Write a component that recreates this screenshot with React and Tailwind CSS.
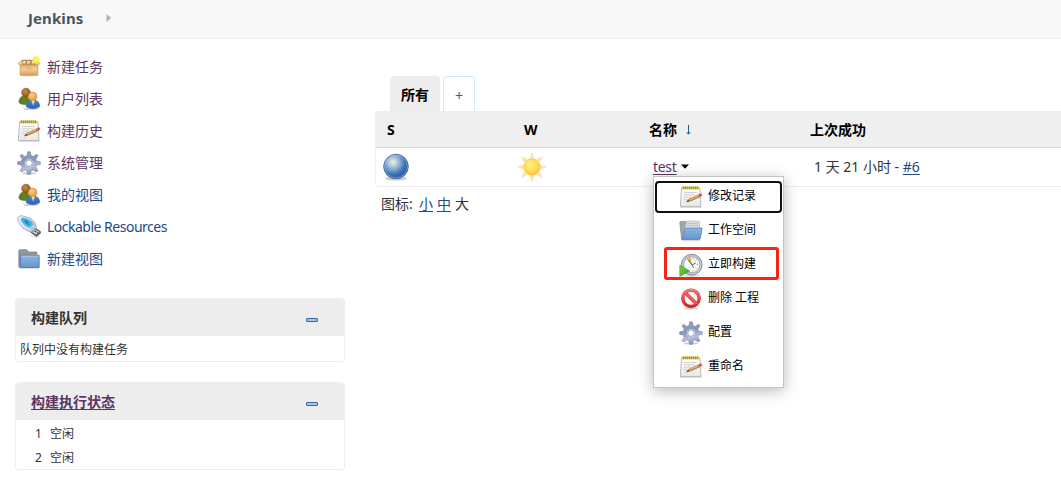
import React from "react";

function Svg({ children, className = "h-6 w-6" }) {
  return (
    <svg viewBox="0 0 24 24" className={`${className} block shrink-0`} aria-hidden="true">
      {children}
    </svg>
  );
}

function Gradients() {
  return (
    <svg className="absolute h-0 w-0" aria-hidden="true">
      <defs>
        <linearGradient id="box" x1="0" y1="0" x2="0" y2="1">
          <stop offset="0" stopColor="#dba05a" />
          <stop offset="0.4" stopColor="#f6cf98" />
          <stop offset="1" stopColor="#d9a15e" />
        </linearGradient>
        <radialGradient id="glow">
          <stop offset="0" stopColor="#fffc6a" />
          <stop offset="0.5" stopColor="#fbf02c" />
          <stop offset="1" stopColor="#fff27a" stopOpacity="0" />
        </radialGradient>
        <radialGradient id="hair" cx="0.4" cy="0.35" r="0.7">
          <stop offset="0" stopColor="#c39246" />
          <stop offset="1" stopColor="#84520f" />
        </radialGradient>
        <radialGradient id="face" cx="0.4" cy="0.35" r="0.7">
          <stop offset="0" stopColor="#ffd08a" />
          <stop offset="1" stopColor="#e3952e" />
        </radialGradient>
        <linearGradient id="suit" x1="0" y1="0" x2="0" y2="1">
          <stop offset="0" stopColor="#4d86ca" />
          <stop offset="1" stopColor="#2a61ab" />
        </linearGradient>
        <linearGradient id="paper" x1="0" y1="0" x2="0" y2="1">
          <stop offset="0" stopColor="#ffffff" />
          <stop offset="1" stopColor="#e6e6e6" />
        </linearGradient>
        <linearGradient id="gear" x1="0" y1="0" x2="0.3" y2="1">
          <stop offset="0" stopColor="#9aa3b8" />
          <stop offset="0.5" stopColor="#8795be" />
          <stop offset="0.8" stopColor="#b9c0dd" />
          <stop offset="1" stopColor="#8f9cc4" />
        </linearGradient>
        <linearGradient id="folder" x1="0" y1="0" x2="0" y2="1">
          <stop offset="0" stopColor="#8fb4df" />
          <stop offset="1" stopColor="#6496cf" />
        </linearGradient>
        <linearGradient id="metal" x1="0" y1="0" x2="1" y2="1">
          <stop offset="0" stopColor="#eef2f6" />
          <stop offset="1" stopColor="#b3bdcb" />
        </linearGradient>
        <radialGradient id="ball" cx="0.38" cy="0.33" r="0.65">
          <stop offset="0" stopColor="#f1f4dc" />
          <stop offset="0.35" stopColor="#9dbbd8" />
          <stop offset="0.75" stopColor="#3a72b4" />
          <stop offset="1" stopColor="#2c5f9f" />
        </radialGradient>
        <radialGradient id="sun" cx="0.4" cy="0.35" r="0.7">
          <stop offset="0" stopColor="#fff18a" />
          <stop offset="0.6" stopColor="#ffdc50" />
          <stop offset="1" stopColor="#fabf3c" />
        </radialGradient>
        <linearGradient id="stop" x1="0" y1="0" x2="0" y2="1">
          <stop offset="0" stopColor="#f07a7c" />
          <stop offset="1" stopColor="#d8232a" />
        </linearGradient>
        <linearGradient id="go" x1="0" y1="0" x2="1" y2="1">
          <stop offset="0" stopColor="#7ed957" />
          <stop offset="1" stopColor="#2f9a1a" />
        </linearGradient>
      </defs>
    </svg>
  );
}

function BoxIcon() {
  return (
    <Svg>
      <ellipse cx="12" cy="20.5" rx="9.5" ry="1.2" fill="#000" opacity="0.13" />
      <path d="M5 5h14l1.500 5h-17z" fill="#b98b54" stroke="#c08e50" strokeWidth=".5" />
      <path d="M6.300 6h2.500l-.4 2.400H5.500zm4 0h2.500l.3 2.400h-3.200zm4.300 0h2l.8 2.400h-2.500z" fill="#ecdcc0" />
      <path d="M3.200 9.500h17.600v10.700H3.200z" fill="url(#box)" stroke="#c18e51" strokeWidth=".7" />
      <path d="M5 5.200.7 8.600l2.500 1.700L5.300 9zm14 0 4.300 3.400-2.500 1.700L18.700 9z" fill="#f0cd9b" stroke="#c79459" strokeWidth=".5" />
      <path d="M9.300 12.500h5.400v2.200H9.300z" fill="#e0ac6b" opacity=".7" />
      <circle cx="19" cy="5" r="4.700" fill="url(#glow)" />
    </Svg>
  );
}

function PeopleIcon() {
  return (
    <Svg>
      <ellipse cx="14" cy="21.800" rx="8" ry="1.200" fill="#000" opacity="0.18" />
      <path d="M2 15.500c0-4 2-6.500 5.300-6.500s5.300 2.500 5.300 6.500c-1.800 2.600-8.700 2.600-10.600 0z" fill="#63801d" stroke="#4a6410" strokeWidth=".6" />
      <circle cx="9" cy="5.600" r="4.400" fill="url(#hair)" stroke="#7d4e12" strokeWidth=".5" />
      <path d="M9.200 19.600c0-4 2-6.500 6.700-6.500s6.700 2.500 6.700 6.500c-2 2.400-11.200 2.400-13.400 0z" fill="url(#suit)" stroke="#2a5c9f" strokeWidth=".6" />
      <path d="m14.300 13.200 1.900 5.400 1.900-5.400z" fill="#f3f6fa" />
      <path d="m15.600 14.500.6 3.500.6-3.500z" fill="#86abd8" />
      <circle cx="15.700" cy="9.400" r="4.300" fill="url(#face)" stroke="#cb8221" strokeWidth=".5" />
    </Svg>
  );
}

function NotepadIcon() {
  return (
    <Svg>
      <path d="M1.500 21.600h21v1.200h-21z" fill="#000" opacity=".15" />
      <path d="M2.600 3h18.200l1.200 18.600H1.300z" fill="url(#paper)" stroke="#a9a9a9" strokeWidth=".8" />
      <path d="M3.300 1.600h16.900v2.600H3.300z" fill="#d6c661" />
      <path d="M4.300 1.300v3m2-3v3m2-3v3m2-3v3m2-3v3m2-3v3m2-3v3m2-3v3" stroke="#8c7a22" strokeWidth=".8" />
      <path d="M5 7.500h12.500M5 9.800h11M4.800 12.200h7M4.800 14.600h4" stroke="#c6c6c6" strokeWidth=".8" />
      <path d="m7.500 16.800 2.800-2.700 9.300-4.200 1 2-9.100 4.100z" fill="#dc9c40" stroke="#805321" strokeWidth=".6" />
      <path d="m7.500 16.800 1.800-1.700.8 1.200z" fill="#3d3226" />
      <path d="m10.600 14.600 9-4" stroke="#f3ca82" strokeWidth=".7" />
      <path d="m19.600 9.700 2-.9c1.200-.4 2 1.200.9 1.900l-2 1z" fill="#dd554e" stroke="#b7463f" strokeWidth=".4" />
    </Svg>
  );
}

function GearIcon() {
  return (
    <Svg>
      <ellipse cx="12" cy="22.400" rx="7" ry="1.200" fill="#000" opacity=".2" />
      <path
        fill="url(#gear)"
        stroke="#7583a5"
        strokeWidth=".6"
        strokeLinejoin="round"
        fillRule="evenodd"
        d="M10.700.8h2.600l.7 3.800 2.200.9 3.300-2.300 1.500 1.500-2.200 3.400.9 2.100 3.600.6v2.600l-3.600.7-.9 2.200 2.200 3.200-1.500 1.600-3.300-2.200-2.200.9-.7 3.500h-2.600l-.7-3.500-2.200-.9-3.300 2.200L3 19.500l2.200-3.200-.9-2.200-3.600-.7v-2.600l3.600-.6.9-2.100L3 4.700l1.500-1.500 3.300 2.300 2.200-.9zM12 8.900a3.200 3.200 0 1 0 0 6.400 3.200 3.200 0 0 0 0-6.400z"
      />
      <circle cx="12" cy="12.100" r="4" fill="none" stroke="#c5cde0" strokeWidth=".9" />
    </Svg>
  );
}

function UsbIcon() {
  return (
    <Svg>
      <path d="M9 17.500c3 3 9 5 14 3.500l-1 1.500c-5 .8-10-1.500-13-5z" fill="#000" opacity=".13" />
      <path d="m13.500 17.300 4.600-4.300 5.400 3.600v1.600l-4 3.300z" fill="#565657" stroke="#3d3d3d" strokeWidth=".5" />
      <path d="m15 17.200 3.300-3 4.300 2.900-3.200 2.700z" fill="#c9c9c6" />
      <path d="m17.300 16.600 1.200-1 1 .7-1.200 1zm2.200 1.400 1.100-1 .9.600-1.100 1z" fill="#333" />
      <path d="M.8 4.200C.5 1.800 2.500.5 5 .8l6.600 1.700c3 1 6.700 4.600 7.500 8.200v2.100l-4.500 4.300c-4.600-1-8.600-3.500-11-6.600C2 8.300 1 6.200.8 4.200z" fill="url(#metal)" stroke="#8f9bab" strokeWidth=".7" />
      <path d="M4 3.600c.7-1 2-1.100 3.400-.7l4 1.400c2.200 1 4.200 2.900 4.900 5l-3.500 3.300C9 11.800 5.600 8.600 4 5.600z" fill="#43b4ea" />
      <path d="m7 5.500 5.200 2.900m-3-3.200 1.700 2.700m-2.300-.7 1.300 2m.8-.4 1.500 1.200" stroke="#14739f" strokeWidth=".9" fill="none" />
      <path d="M2.500 6.700c2 4 6.500 7.600 11.300 8.600" stroke="#fff" strokeWidth=".8" fill="none" opacity=".8" />
    </Svg>
  );
}

function FolderIcon() {
  return (
    <Svg>
      <path d="M2 20.600h20v1.100H2z" fill="#000" opacity=".18" />
      <path d="M1.800 20V4.200c0-1 .5-1.500 1.400-1.500h6.500l1.800 2.300h8.300V20z" fill="#92989c" stroke="#777d82" strokeWidth=".7" />
      <path d="M3.500 8.300h18.700v12.200H3.500z" fill="url(#folder)" stroke="#4575b0" strokeWidth=".8" />
      <path d="M4.300 9.100h17.100" stroke="#b8d0ed" strokeWidth=".8" />
    </Svg>
  );
}

function OpenFolderIcon() {
  return (
    <Svg>
      <path d="M3 21h18.500v1.200H3z" fill="#000" opacity=".15" />
      <path d="M2.600 20 .8 4c0-1 .4-1.600 1.300-1.600h4.400L8 4h11v16z" fill="#a2a6a8" stroke="#83888c" strokeWidth=".7" />
      <path d="M7.500 2.200h12.800l.7 10.400H5z" fill="#dedfe0" stroke="#a3a6a8" strokeWidth=".6" />
      <path d="M8 4.500h11M7.600 6.500h11.700" stroke="#b9bbbc" strokeWidth=".8" />
      <path d="M5.700 10.400c.2-.9.700-1.300 1.500-1.300l16-.1-1.900 10.600c-.1.600-.6.900-1.200.9H2.600c1.600-2.800 2.300-6 3.100-10.100z" fill="url(#folder)" stroke="#4b7db8" strokeWidth=".7" />
    </Svg>
  );
}

function ClockIcon() {
  return (
    <Svg>
      <ellipse cx="13" cy="22.600" rx="8" ry="1.100" fill="#000" opacity=".15" />
      <circle cx="12.700" cy="11.700" r="10.400" fill="#c6c7d2" stroke="#777985" strokeWidth=".8" />
      <circle cx="12.700" cy="11.700" r="8.100" fill="#f8f8f7" stroke="#8f919c" strokeWidth=".7" />
      <path d="M12.700 11.700 7.500 6c1.200-1.200 2.500-1.800 4.500-2z" fill="#dcbf4a" />
      <path d="M14 5.300v1m0 11v1m5-7h-1.200m-.5-4.500-.6.600m.6 8.300-.6-.6" stroke="#77797b" strokeWidth=".9" />
      <path d="m9.500 7 3.600 5 3.700-2m-3.700 2 1.400 2.700" stroke="#555" strokeWidth=".9" fill="none" />
      <path d="M.8 12.300 10.800 18 .8 23.500z" fill="url(#go)" stroke="#3c9a28" strokeWidth=".6" />
    </Svg>
  );
}

function ForbiddenIcon() {
  return (
    <Svg>
      <ellipse cx="12" cy="21.300" rx="7.500" ry="1.200" fill="#000" opacity=".18" />
      <circle cx="12" cy="11.300" r="8.200" fill="#f7f3f3" stroke="#c63a3e" strokeWidth="3.400" />
      <path d="m6.200 5.700 11.500 11.300" stroke="#c63a3e" strokeWidth="3.300" />
      <circle cx="12" cy="11.300" r="8.200" fill="none" stroke="url(#stop)" strokeWidth="2.500" />
      <path d="m6.200 5.700 11.500 11.300" stroke="#ea5a5e" strokeWidth="2.400" />
    </Svg>
  );
}

const TASKS = [
  ["新建任务", BoxIcon, "text-[#5c3566]"],
  ["用户列表", PeopleIcon, "text-[#5c3566]"],
  ["构建历史", NotepadIcon, "text-[#5c3566]"],
  ["系统管理", GearIcon, "text-[#5c3566]"],
  ["我的视图", PeopleIcon, "text-[#204a87]"],
  ["Lockable Resources", UsbIcon, "text-[#204a87] tracking-[-0.5px]"],
  ["新建视图", FolderIcon, "text-[#204a87]"],
];

const ACTIONS = [
  ["修改记录", NotepadIcon, "h-8 rounded border-2 border-[#101010] pl-[22px]"],
  ["工作空间", OpenFolderIcon, "h-8 pl-6"],
  ["立即构建", ClockIcon, "-mt-0.5 mb-px ml-[9px] mr-[3px] h-[33px] rounded-[3px] border-3 border-[#f42419] pt-[3px] pl-3"],
  ["删除 工程", ForbiddenIcon, "h-8 pl-6"],
  ["配置", GearIcon, "h-8 pl-6"],
  ["重命名", NotepadIcon, "h-8 pl-6"],
];

function Panel({ title, linked, children }) {
  return (
    <section className="overflow-hidden rounded border border-[#ededed]">
      <header className="flex h-[37px] items-center justify-between bg-[#ededed] pt-px pr-[26px] pl-[15px]">
        <h2 className={linked ? "font-bold text-[#5c3566] underline underline-offset-2" : "font-bold text-[#333]"}>{title}</h2>
        <span className="mt-1 h-1 w-3 rounded-[1px] border border-[#3465a4] bg-[#a9c5e8]" />
      </header>
      {children}
    </section>
  );
}

function Sidebar() {
  return (
    <aside className="w-[330px] shrink-0">
      <nav className="flex flex-col">
        {TASKS.map(([label, Icon, tone]) => (
          <a key={label} className={`flex h-8 items-center gap-1.5 pl-0.5 ${tone}`}>
            <Icon />
            <span>{label}</span>
          </a>
        ))}
      </nav>
      <div className="mt-[23px] flex flex-col gap-5">
        <Panel title="构建队列">
          <p className="h-[25px] pt-px pl-1 text-xs leading-[26px] text-[#333]">队列中没有构建任务</p>
        </Panel>
        <Panel title="构建执行状态" linked>
          <ul className="pt-px text-xs text-[#333]">
            {[1, 2].map((n) => (
              <li key={n} className="flex h-6 items-center pt-0.5 pl-[19px]">
                <span className="w-[15px]">{n}</span>
                <span>空闲</span>
              </li>
            ))}
          </ul>
        </Panel>
      </div>
    </aside>
  );
}

function ActionMenu() {
  return (
    <div className="absolute top-[19px] left-0 z-10 flex h-[212px] w-[131px] flex-col gap-0.5 border border-[#c4c4c4] bg-white px-px pt-1 text-xs text-black shadow-[0_3px_14px_rgba(0,0,0,0.28)]">
      {ACTIONS.map(([label, Icon, box]) => (
        <a key={label} className={`flex shrink-0 items-center ${box}`}>
          <Icon />
          <span className="ml-[5px] -mt-0.5 whitespace-nowrap">{label}</span>
        </a>
      ))}
    </div>
  );
}

function Ball() {
  return (
    <svg viewBox="0 0 32 32" className="block h-8 w-8">
      <ellipse cx="16" cy="27.500" rx="11" ry="2" fill="#000" opacity=".2" />
      <circle cx="16" cy="15.500" r="12.300" fill="url(#ball)" stroke="#4a6e9b" strokeWidth=".9" />
      <circle cx="16" cy="15.500" r="11.300" fill="none" stroke="#b4cce5" strokeWidth=".8" opacity=".6" />
    </svg>
  );
}

function Sun() {
  return (
    <svg viewBox="0 0 32 32" className="block h-8 w-8">
      {[0, 45, 90, 135, 180, 225, 270, 315].map((angle) => (
        <path key={angle} d="M16 1.800 17.900 7h-3.800z" fill="#ffe9a8" stroke="#f5d58c" strokeWidth=".5" transform={`rotate(${angle} 16 16)`} />
      ))}
      <circle cx="16" cy="16" r="8.200" fill="url(#sun)" stroke="#f0b94b" strokeWidth=".7" />
    </svg>
  );
}

const COLUMNS = "grid grid-cols-[136px_129px_161px_280px]";

function Projects() {
  return (
    <main className="ml-[30px] min-w-0 flex-1 pt-[25px]">
      <div className="flex h-[35px] gap-[3px] pl-[15px]">
        <span className="flex w-[50px] items-center justify-center rounded-t bg-[#ededed] pt-[3px] font-bold text-black">所有</span>
        <span className="flex w-8 items-center justify-center rounded-t border border-b-0 border-[#d4e9fb] pt-[3px] text-[#006be0]">+</span>
      </div>
      <div className="rounded-l border border-r-0 border-[#ededed]">
        <div className={`${COLUMNS} h-9 items-center border-b border-[#d9d9d9] bg-[#efefef] pl-[11px] font-bold text-black`}>
          <span>S</span>
          <span className="pl-px">W</span>
          <span className="-ml-[3px] flex items-center">
            名称
            <svg viewBox="0 0 7 10" className="ml-2 h-2.5 w-[7px]" fill="none" stroke="#17618a">
              <path d="M3.500 0v9M1.500 7 3.500 9.200 5.500 7" />
            </svg>
          </span>
          <span className="-ml-[3px]">上次成功</span>
        </div>
        <div className={`${COLUMNS} h-[38px] items-center pl-1`}>
          <Ball />
          <Sun />
          <div className="relative ml-2 flex items-center">
            <a className="tracking-[-0.3px] text-[#5c3566] underline underline-offset-2">test</a>
            <svg viewBox="0 0 8 5" className="-mt-0.5 ml-1 h-[5px] w-2">
              <path d="M0 .5h8L4 4.700z" fill="#000" />
            </svg>
            <ActionMenu />
          </div>
          <span className="ml-2 text-[#333]">
            1 天 21 小时 - <a className="text-[#204a87] underline underline-offset-2">#6</a>
          </span>
        </div>
      </div>
      <div className="mt-[7px] flex pl-1.5 text-[#333]">
        <span className="w-[38px]">图标:</span>
        <a className="text-[#204a87] underline underline-offset-2">小</a>
        <a className="ml-1 text-[#204a87] underline underline-offset-2">中</a>
        <span className="ml-1">大</span>
      </div>
    </main>
  );
}

export default function App() {
  return (
    <div className="h-[502px] w-full overflow-hidden bg-white font-['Noto_Sans','Noto_Sans_CJK_SC',sans-serif] text-sm leading-5">
      <Gradients />
      <header className="flex h-[39px] items-center border-b border-[#e5edef] bg-[#f8f8f8] pb-0.5 pl-7">
        <span className="text-[15px] font-bold tracking-[0.1px] text-[#4d545d]">Jenkins</span>
        <svg viewBox="0 0 5 8" className="ml-[23px] h-2 w-[5px]">
          <path d="M.5 0 5 4 .5 8z" fill="#afafaf" />
        </svg>
      </header>
      <div className="flex pt-3 pl-[15px]">
        <Sidebar />
        <Projects />
      </div>
    </div>
  );
}
